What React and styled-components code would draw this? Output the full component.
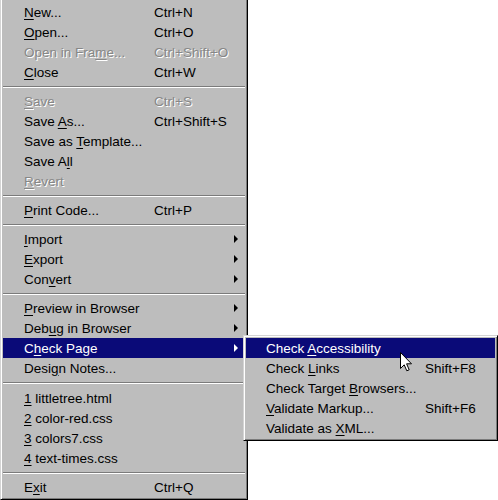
import React from "react";
import styled, { createGlobalStyle, css } from "styled-components";

const Global = createGlobalStyle`
  html, body { margin: 0; padding: 0; background: #ffffff; }
  body { font-family: "Liberation Sans", Arial, sans-serif; }
`;

const Stage = styled.div`
  position: relative;
  width: 498px;
  height: 500px;
  overflow: hidden;
  background: #ffffff;
`;

const MenuPanel = styled.div`
  box-sizing: border-box;
  width: 248px;
  height: 500px;
  background: #bdbdbd;
  border-left: 1px solid #d4d4d4;
  border-right: 1px solid #000000;
  border-bottom: 1px solid #000000;
  box-shadow: inset 1px 0 0 #ffffff, inset -1px -1px 0 #7b7b7b;
  padding: 2px 2px 2px 2px;
  display: flex;
  flex-direction: column;
`;

const SubPanel = styled.div`
  position: absolute;
  left: 243px;
  top: 335px;
  box-sizing: border-box;
  width: 255px;
  background: #bdbdbd;
  border: 1px solid;
  border-color: #d4d4d4 #000000 #000000 #d4d4d4;
  box-shadow: inset 1px 1px 0 #ffffff, inset -1px -1px 0 #7b7b7b;
  padding: 2px;
  display: flex;
  flex-direction: column;
`;

const Row = styled.div`
  display: flex;
  align-items: center;
  height: 20px;
  padding-left: ${(p) => p.$indent}px;
  font-size: 13.5px;
  line-height: 20px;
  color: ${(p) => (p.$active ? "#ffffff" : "#000000")};
  background: ${(p) => (p.$active ? "#0a0a78" : "transparent")};
  white-space: nowrap;
  ${(p) =>
    p.$disabled &&
    css`
      color: #878787;
      text-shadow: 1px 1px 0 #ffffff;
    `}
`;

const Label = styled.span`
  width: ${(p) => p.$width}px;
  flex: none;
  padding-top: 1px;
`;

const Shortcut = styled.span`
  flex: 1;
  padding-top: 1px;
`;

const Key = styled.span`
  text-decoration: underline;
  text-underline-offset: 2px;
  text-decoration-thickness: 1px;
`;

const Arrow = styled.span`
  width: 0;
  height: 0;
  border-top: 4px solid transparent;
  border-bottom: 4px solid transparent;
  border-left: 4px solid ${(p) => (p.$active ? "#ffffff" : "#000000")};
  margin-right: 7px;
`;

const Separator = styled.div`
  height: ${(p) => (p.$tall ? 10 : 9)}px;
  display: flex;
  flex-direction: column;
  justify-content: center;
  &::before {
    content: "";
    display: block;
    border-top: 1px solid #7b7b7b;
    border-bottom: 1px solid #ffffff;
  }
`;

const Cursor = styled.svg`
  position: absolute;
  left: 399px;
  top: 351px;
`;

const mainItems = [
  { t: ["", "N", "ew..."], s: "Ctrl+N" },
  { t: ["", "O", "pen..."], s: "Ctrl+O" },
  { t: ["Open in Fra", "m", "e..."], s: "Ctrl+Shift+O", d: true },
  { t: ["", "C", "lose"], s: "Ctrl+W" },
  "sep",
  { t: ["", "S", "ave"], s: "Ctrl+S", d: true },
  { t: ["Save ", "A", "s..."], s: "Ctrl+Shift+S" },
  { t: ["Save as ", "T", "emplate..."] },
  { t: ["Save A", "l", "l"] },
  { t: ["", "R", "evert"], d: true },
  "sep",
  { t: ["", "P", "rint Code..."], s: "Ctrl+P" },
  "sep",
  { t: ["", "I", "mport"], sub: true },
  { t: ["", "E", "xport"], sub: true },
  { t: ["Con", "v", "ert"], sub: true },
  "sep",
  { t: ["", "P", "review in Browser"], sub: true },
  { t: ["Deb", "u", "g in Browser"], sub: true },
  { t: ["C", "h", "eck Page"], sub: true, a: true },
  { t: ["Desi", "g", "n Notes..."] },
  "sepTall",
  { t: ["", "1", " littletree.html"] },
  { t: ["", "2", " color-red.css"] },
  { t: ["", "3", " colors7.css"] },
  { t: ["", "4", " text-times.css"] },
  "sep",
  { t: ["E", "x", "it"], s: "Ctrl+Q" },
];

const subItems = [
  { t: ["Check ", "A", "ccessibility"], a: true },
  { t: ["Check ", "L", "inks"], s: "Shift+F8" },
  { t: ["Check Target ", "B", "rowsers..."] },
  { t: ["", "V", "alidate Markup..."], s: "Shift+F6" },
  { t: ["Validate as ", "X", "ML..."] },
];

function Item({ item, indent, labelWidth }) {
  const [pre, key, post] = item.t;
  return (
    <Row $indent={indent} $active={item.a} $disabled={item.d}>
      <Label $width={labelWidth}>
        {pre}
        <Key>{key}</Key>
        {post}
      </Label>
      <Shortcut>{item.s || ""}</Shortcut>
      {item.sub && <Arrow $active={item.a} />}
    </Row>
  );
}

export default function App() {
  return (
    <Stage>
      <Global />
      <MenuPanel>
        {mainItems.map((it, i) =>
          typeof it === "string" ? (
            <Separator key={i} $tall={it === "sepTall"} />
          ) : (
            <Item key={i} item={it} indent={21} labelWidth={130} />
          )
        )}
      </MenuPanel>
      <SubPanel>
        {subItems.map((it, i) => (
          <Item key={i} item={it} indent={20} labelWidth={159} />
        ))}
      </SubPanel>
      <Cursor width="14" height="22" viewBox="0 0 14 22">
        <path
          d="M1.5 1.5 L1.5 17.5 L5.2 13.8 L7.8 19.8 L10.2 18.8 L7.6 12.8 L12.5 12.8 Z"
          fill="#ffffff"
          stroke="#000000"
          strokeWidth="1"
          strokeLinejoin="miter"
        />
      </Cursor>
    </Stage>
  );
}
